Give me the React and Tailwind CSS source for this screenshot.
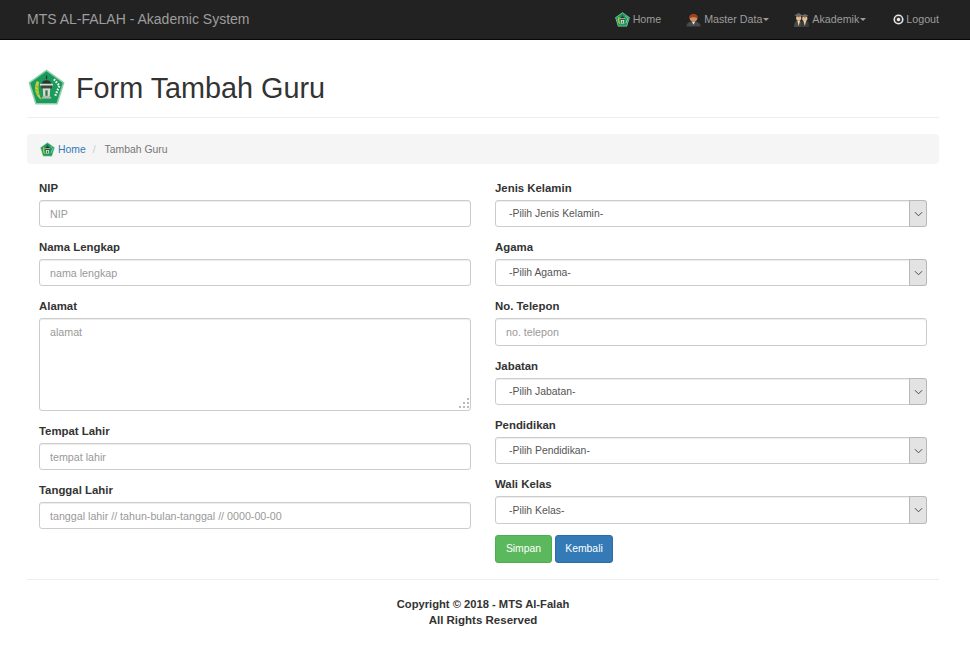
import React from "react";

function Logo({ className }) {
  return (
    <svg viewBox="0 0 40 40" className={className}>
      <path d="M20 0.5 L39.5 14.5 L32 38.5 L8 38.5 L0.5 14.5 Z" fill="#8ccfa8" />
      <path d="M20 2.5 L37.5 15.2 L30.8 36.8 L9.2 36.8 L2.5 15.2 Z" fill="#1a9a5c" />
      <path d="M9.5 13 C5.5 21 8 30 15 33.5 C11.5 28 10.5 21 12 14 Z" fill="#c4cf3a" />
      <path d="M8 18 L11 20 M7.5 22 L11 24 M8.5 26 L12 27.5" stroke="#8fb52a" strokeWidth="1.2" />
      <path d="M28 11 L34 18 L29 30" fill="none" stroke="#f2f2f2" strokeWidth="2.4" strokeDasharray="1.8 1.4" />
      <path d="M20 7 V11" stroke="#333" strokeWidth="1.4" />
      <path d="M15 16 C15 11 25 11 25 16 Z" fill="#2f2f2f" />
      <path d="M13 16 H27 V18 H13 Z" fill="#ddddd4" />
      <path d="M14 18 H26 V21 H14 Z" fill="#444" />
      <path d="M16 21 H24 L23.5 30 H16.5 Z" fill="#d9d9cc" />
      <path d="M18.8 23 H21.2 V29 H18.8 Z" fill="#3a6f4e" />
      <path d="M15 30 H25 V32 H15 Z" fill="#b9b9aa" />
    </svg>
  );
}

function PersonIcon() {
  return (
    <svg viewBox="0 0 16 16" className="w-[15px] h-[15px]">
      <path d="M0.5 15.5 C0.5 11 4 10 8 10 C12 10 15.5 11 15.5 15.5 Z" fill="#4a4a4a" />
      <path d="M6.2 10 L8 13.5 L9.8 10 Z" fill="#e5e5e5" />
      <ellipse cx="8" cy="6.5" rx="4" ry="4" fill="#c98f66" />
      <path d="M3.2 7.5 C2.5 0.5 13.5 0.5 12.8 7.5 C11 5 5 5 3.2 7.5 Z" fill="#a23f16" />
    </svg>
  );
}

function GradIcon() {
  return (
    <svg viewBox="0 0 16 16" className="w-[15px] h-[15px]">
      <path d="M0 16 C0 11 2 9 5 9 C8 9 9 11 9 16 Z" fill="#4a4a4a" />
      <path d="M7 16 C7 11 9 9 12 9 C15 9 16 11 16 16 Z" fill="#3c3c3c" />
      <path d="M3.5 9 L5 15 L6.5 9 Z M10 9 L11.5 15 L13 9 Z" fill="#f0d9a8" />
      <circle cx="5" cy="6.5" r="2.8" fill="#e6b98e" />
      <circle cx="11.5" cy="7" r="2.8" fill="#e6b98e" />
      <path d="M0.5 3.5 L5 1 L9 3.5 L5 5.5 Z M7.5 4 L11.5 2 L15.5 4 L11.5 6 Z" fill="#6a6a6a" />
    </svg>
  );
}

function LogoutIcon() {
  return (
    <svg viewBox="0 0 12 12" className="w-[11px] h-[11px]">
      <circle cx="6" cy="6" r="5.5" fill="#e6e6e6" />
      <circle cx="6" cy="6" r="3.8" fill="#333" />
      <circle cx="6" cy="6" r="1.8" fill="#eee" />
    </svg>
  );
}

function Caret() {
  return <span className="ml-px inline-block w-0 h-0 border-x-[3px] border-x-transparent border-t-[3px] border-t-[#9d9d9d] align-middle" />;
}

function NavItem({ icon, children, caret, className, gap = "mr-[3px]" }) {
  return (
    <div className={`flex items-center text-[10.7px] text-[#9d9d9d] ${className}`}>
      <span className={`${gap} flex`}>{icon}</span>
      <span>{children}</span>
      {caret && <Caret />}
    </div>
  );
}

function Label({ children }) {
  return <label className="block text-[11.4px] font-bold leading-[17px] text-[#333] mb-[3px]">{children}</label>;
}

const inputCls = "block w-full h-[27px] px-[10px] text-[10.7px] bg-white border border-[#ccc] rounded-[3px] shadow-[inset_0_1px_1px_rgba(0,0,0,0.075)] placeholder:text-[#999] outline-none";

function TextField({ label, placeholder, mb = "mb-[12px]", h }) {
  return (
    <div className={mb}>
      <Label>{label}</Label>
      <input className={`${inputCls} ${h || ""}`} placeholder={placeholder} />
    </div>
  );
}

function SelectField({ label, value, mb = "mb-[12px]", h = "h-[27px]", textPad = "" }) {
  return (
    <div className={mb}>
      <Label>{label}</Label>
      <div className={`flex items-stretch ${h} pl-[13px] text-[10.4px] text-[#555] bg-white border border-[#ccc] rounded-[3px] shadow-[inset_0_1px_1px_rgba(0,0,0,0.075)]`}>
        <span className={`flex-1 self-center ${textPad}`}>{value}</span>
        <span className="flex items-center justify-center w-[18px] -my-px -mr-px bg-[#e3e3e3] border border-[#b8b8b8] rounded-r-[3px]">
          <svg viewBox="0 0 10 6" className="w-[9px] h-[6px]">
            <path d="M1 1 L5 5 L9 1" fill="none" stroke="#3a3a3a" strokeWidth="1" />
          </svg>
        </span>
      </div>
    </div>
  );
}

export default function App() {
  return (
    <div className="min-h-[652px] bg-white text-[#333] font-['Liberation_Sans',Arial,sans-serif]">
      <nav className="h-[40px] bg-[#222] border-b border-[#080808] flex items-center pl-[27px] pr-[31px]">
        <div className="flex-1 text-[14px] text-[#9d9d9d]">MTS AL-FALAH - Akademic System</div>
        <NavItem className="mr-[25px]" icon={<Logo className="w-[15px] h-[15px]" />}>Home</NavItem>
        <NavItem className="mr-[25px]" icon={<PersonIcon />} caret>Master Data</NavItem>
        <NavItem className="mr-[27px]" icon={<GradIcon />} caret>Akademik</NavItem>
        <NavItem gap="mr-[2px]" icon={<LogoutIcon />}>Logout</NavItem>
      </nav>

      <main className="pl-[27px] pr-[31px]">
        <header className="flex items-center gap-[11px] h-[78px] pt-[18px] pl-[1px] border-b border-[#eee]">
          <Logo className="w-[37px] h-[37px]" />
          <h1 className="text-[28.8px] leading-[36px] text-[#333]">Form Tambah Guru</h1>
        </header>

        <div className="flex items-center h-[30px] mt-[16px] pt-[1px] px-[13px] bg-[#f5f5f5] rounded-[4px] text-[10.4px]">
          <Logo className="w-[15px] h-[15px] mr-[3px]" />
          <span className="text-[#337ab7]">Home</span>
          <span className="text-[#ccc] mx-[7px]">/</span>
          <span className="text-[#777] ml-[2px]">Tambah Guru</span>
        </div>

        <div className="grid grid-cols-2 gap-x-[24px] px-[12px] mt-[16px] h-[399px]">
          <div>
            <TextField label="NIP" placeholder="NIP" />
            <TextField label="Nama Lengkap" placeholder="nama lengkap" />
            <div className="mb-[12px]">
              <Label>Alamat</Label>
              <div className="relative">
                <textarea className="block w-full h-[93px] px-[10px] py-[5px] text-[10.7px] bg-white border border-[#ccc] rounded-[3px] shadow-[inset_0_1px_1px_rgba(0,0,0,0.075)] placeholder:text-[#999] outline-none resize-none" placeholder="alamat" />
                <svg viewBox="0 0 12 12" className="absolute right-[1px] bottom-[1px] w-[12px] h-[12px]">
                  <g fill="#bbb">
                    <rect x="9" y="0" width="2" height="2" />
                    <rect x="5" y="4" width="2" height="2" />
                    <rect x="9" y="4" width="2" height="2" />
                    <rect x="1" y="8" width="2" height="2" />
                    <rect x="5" y="8" width="2" height="2" />
                    <rect x="9" y="8" width="2" height="2" />
                  </g>
                </svg>
              </div>
            </div>
            <TextField label="Tempat Lahir" placeholder="tempat lahir" />
            <TextField label="Tanggal Lahir" placeholder="tanggal lahir // tahun-bulan-tanggal // 0000-00-00" />
          </div>

          <div>
            <SelectField label="Jenis Kelamin" value="-Pilih Jenis Kelamin-" />
            <SelectField label="Agama" value="-Pilih Agama-" />
            <TextField label="No. Telepon" placeholder="no. telepon" h="h-[28px]" />
            <SelectField label="Jabatan" value="-Pilih Jabatan-" />
            <SelectField label="Pendidikan" value="-Pilih Pendidikan-" />
            <SelectField label="Wali Kelas" value="-Pilih Kelas-" h="h-[28px]" mb="mb-[11px]" textPad="pt-[2px]" />
            <div className="flex gap-[3px]">
              <button className="h-[28px] w-[57px] bg-[#5cb85c] border border-[#4cae4c] rounded-[3px] text-white text-[10.4px]">Simpan</button>
              <button className="h-[28px] w-[58px] bg-[#337ab7] border border-[#2e6da4] rounded-[3px] text-white text-[10.4px]">Kembali</button>
            </div>
          </div>
        </div>

        <footer className="border-t border-[#eee] pt-[16px] text-center text-[11.2px] font-bold leading-[16px] text-[#333]">
          <p>Copyright © 2018 - MTS Al-Falah</p>
          <p className="text-[11.5px]">All Rights Reserved</p>
        </footer>
      </main>
    </div>
  );
}
